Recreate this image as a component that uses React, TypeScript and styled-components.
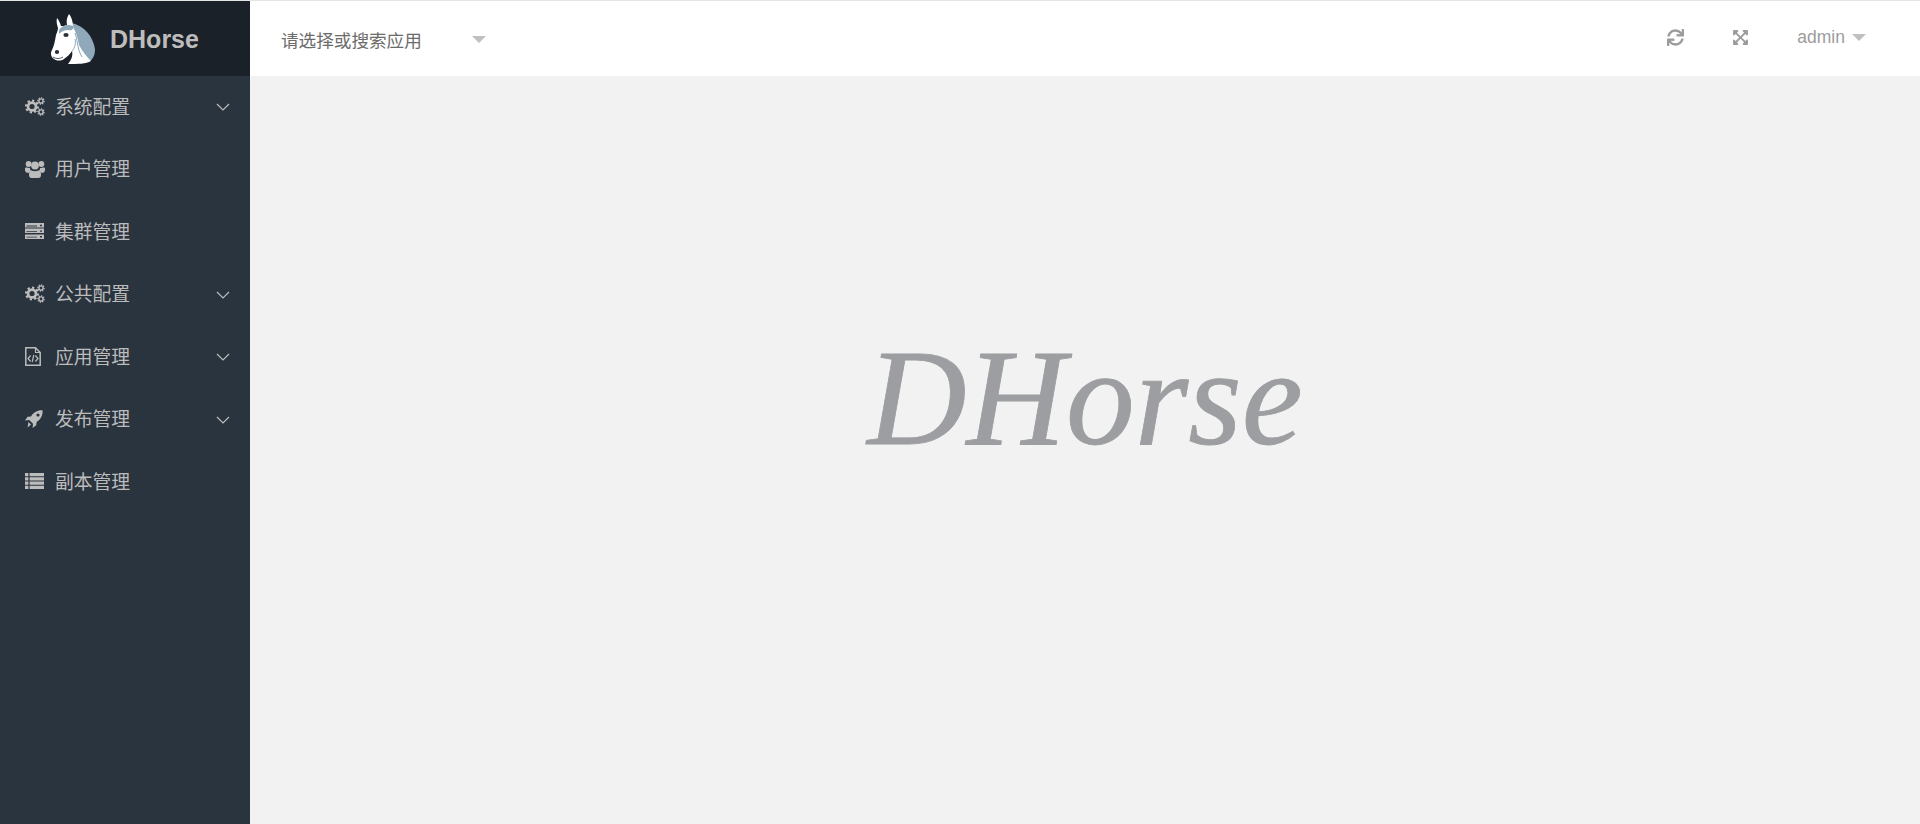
import { ReactNode } from "react";
import styled, { createGlobalStyle } from "styled-components";
import { FaExpandArrowsAlt, FaSync } from "react-icons/fa";

const GlobalStyle = createGlobalStyle`
  html, body {
    margin: 0;
    padding: 0;
    height: 100%;
    overflow: hidden;
    background: #f2f2f2;
    font-family: "Liberation Sans", "Noto Sans CJK SC", sans-serif;
  }
`;

const Gear = ({ x, y, r }: { x: number; y: number; r: number }) => (
  <g fill="none" stroke="currentColor">
    <circle cx={x} cy={y} r={r * 0.62} strokeWidth={r * 0.42} />
    <circle
      cx={x}
      cy={y}
      r={r * 0.92}
      strokeWidth={r * 0.36}
      pathLength={16}
      strokeDasharray="1 1"
    />
  </g>
);

const CogsIcon = () => (
  <svg width="20" height="19" viewBox="0 0 20 19">
    <Gear x={7} y={9.5} r={6.4} />
    <Gear x={16} y={4} r={3.4} />
    <Gear x={16} y={15} r={3.4} />
  </svg>
);

const UsersIcon = () => (
  <svg width="20" height="18" viewBox="0 0 20 18" fill="currentColor">
    <circle cx="3.6" cy="4" r="2.9" />
    <circle cx="16.4" cy="4" r="2.9" />
    <circle cx="10" cy="5.5" r="3.9" />
    <path d="M0 8.5 C0 7.6 1 7.2 2 7.6 C3 8.1 4.2 8.1 5 7.8 C5 9.5 5.4 10.4 6 11 C4.6 11.5 3.8 12.4 3.5 13 C1.5 13 0 12 0 10 Z" />
    <path d="M20 8.5 C20 7.6 19 7.2 18 7.6 C17 8.1 15.8 8.1 15 7.8 C15 9.5 14.6 10.4 14 11 C15.4 11.5 16.2 12.4 16.5 13 C18.5 13 20 12 20 10 Z" />
    <path d="M6 10.2 C8.4 11.6 11.6 11.6 14 10.2 C15.6 10.8 16 12.6 16 15 C16 17 15 18 13.5 18 L6.5 18 C5 18 4 17 4 15 C4 12.6 4.4 10.8 6 10.2 Z" />
  </svg>
);

const ServerIcon = () => (
  <svg width="19" height="16" viewBox="0 0 19 16" fill="currentColor">
    <path d="M0 0 H19 V4.4 H0 Z M0 5.6 H19 V10 H0 Z M0 11.4 H19 V16 H0 Z" />
    <path
      d="M1.5 2.6 H12 V3.4 H1.5 Z M1.5 8.2 H12 V9 H1.5 Z M1.5 13.8 H12 V14.6 H1.5 Z M15 1.8 H17 V3.2 H15 Z M15 7.4 H17 V8.8 H15 Z M15 13 H17 V14.4 H15 Z"
      fill="#2a343f"
    />
  </svg>
);

const FileCodeIcon = () => (
  <svg width="16" height="19" viewBox="0 0 16 19" fill="none" stroke="currentColor">
    <path d="M0.8 0.8 H10.5 L15.2 5.5 V18.2 H0.8 Z" strokeWidth="1.5" />
    <path d="M10.5 0.8 V5.5 H15.2" strokeWidth="1.2" />
    <path d="M5.6 8.5 L3 11.5 L5.6 14.5 M10.4 8.5 L13 11.5 L10.4 14.5 M8.8 8 L7.2 15" strokeWidth="1.2" />
  </svg>
);

const RocketIcon = () => (
  <svg width="18" height="18" viewBox="0 0 18 18" fill="currentColor">
    <path d="M17.6 0.4 C12.5 0 8.6 2.6 6 6.4 L2.6 6.8 L0 10.4 L4.2 10 L8 13.8 L7.6 18 L11.2 15.2 L11.6 12 C15.4 9.4 18 5.5 17.6 0.4 Z M13 3.4 A1.6 1.6 0 1 1 13 6.6 A1.6 1.6 0 1 1 13 3.4 Z" fillRule="evenodd" />
    <path d="M3.4 12 L6 14.6 L2.6 17.4 Z" />
  </svg>
);

const ListIcon = () => (
  <svg width="19" height="16" viewBox="0 0 19 16" fill="currentColor">
    <path d="M0 0 H3.4 V3.2 H0 Z M4.6 0 H19 V3.2 H4.6 Z M0 4.3 H3.4 V7.5 H0 Z M4.6 4.3 H19 V7.5 H4.6 Z M0 8.6 H3.4 V11.8 H0 Z M4.6 8.6 H19 V11.8 H4.6 Z M0 12.8 H3.4 V16 H0 Z M4.6 12.8 H19 V16 H4.6 Z" />
  </svg>
);

type MenuEntry = { label: string; icon: ReactNode; arrow?: boolean };

const menu: MenuEntry[] = [
  { label: "系统配置", icon: <CogsIcon />, arrow: true },
  { label: "用户管理", icon: <UsersIcon /> },
  { label: "集群管理", icon: <ServerIcon /> },
  { label: "公共配置", icon: <CogsIcon />, arrow: true },
  { label: "应用管理", icon: <FileCodeIcon />, arrow: true },
  { label: "发布管理", icon: <RocketIcon />, arrow: true },
  { label: "副本管理", icon: <ListIcon /> },
];

const HorseLogo = () => (
  <svg width="46" height="52" viewBox="50 14 46 52">
    <path
      d="M62 28 L72 24 C84 27 93 37 95 50 C95 56 93 60 90 62 L80 56 L74 30 Z"
      fill="#8fa9bb"
    />
    <path
      d="M57 19 C59 21 60 24 61 27 C63 27 65 27 67 26 C66 22 67 18 69 15 C71 17 73 22 73 28 C76 33 78 40 79 46 C82 52 87 58 91 62 C86 65 78 65 68 65 C72 60 73 56 72 52 C70 55 67 58 64 60 C61 62 57 62 54 60 C51 58 50 54 52 51 C54 47 55 42 56 36 C57 33 58 31 58 29 C57 26 56 22 57 19 Z"
      fill="#ffffff"
    />
    <path
      d="M59 31 C62 26 68 25 73 27 C74 30 72 32 68 31 C65 31 62 32 59 35 Z"
      fill="#8fa9bb"
    />
    <path
      d="M75 34 C78 42 77 50 82 58 M72 52 C75 49 76 44 75 40"
      fill="none"
      stroke="#8fa9bb"
      strokeWidth="1"
    />
    <ellipse cx="66" cy="36" rx="2.6" ry="1.9" fill="#27303a" />
    <ellipse cx="57" cy="53" rx="2.2" ry="1.9" fill="#27303a" />
    <path d="M53 58 C56 60 60 60 63 58" fill="none" stroke="#27303a" strokeWidth="0.8" />
  </svg>
);

const App = () => {
  return (
    <Page>
      <GlobalStyle />
      <Sidebar>
        <Brand>
          <HorseLogo />
          <BrandName>DHorse</BrandName>
        </Brand>
        <Menu>
          {menu.map(({ label, icon, arrow }) => (
            <MenuItem key={label}>
              <MenuIcon>{icon}</MenuIcon>
              <MenuLabel>{label}</MenuLabel>
              {arrow && (
                <Arrow viewBox="0 0 14 8">
                  <path d="M1 1 L7 7 L13 1" />
                </Arrow>
              )}
            </MenuItem>
          ))}
        </Menu>
      </Sidebar>
      <Main>
        <TopBar>
          <AppSelect>
            <span>请选择或搜索应用</span>
            <Caret />
          </AppSelect>
          <Actions>
            <ActionIcon>
              <FaSync />
            </ActionIcon>
            <ActionIcon>
              <FaExpandArrowsAlt />
            </ActionIcon>
            <UserMenu>
              admin
              <Caret />
            </UserMenu>
          </Actions>
        </TopBar>
        <Content>
          <BigTitle>DHorse</BigTitle>
        </Content>
      </Main>
    </Page>
  );
};

const Page = styled.div`
  display: grid;
  grid-template-columns: 250px 1fr;
  height: 824px;
  border-top: 1px solid #e4e4e4;
  box-sizing: border-box;
`;

const Sidebar = styled.aside`
  background: #2a343f;
  display: flex;
  flex-direction: column;
`;

const Brand = styled.div`
  height: 75px;
  background: #1b2129;
  display: flex;
  align-items: center;
  padding-left: 50px;
  gap: 14px;
`;

const BrandName = styled.span`
  font-size: 25px;
  font-weight: 700;
  color: #bdbdbd;
  margin-top: 2px;
`;

const Menu = styled.nav`
  display: flex;
  flex-direction: column;
`;

const MenuItem = styled.div`
  height: 62.5px;
  display: flex;
  align-items: center;
  padding: 0 20px 0 25px;
  font-size: 18.8px;
  line-height: 1;
  color: #bcbcbc;
`;

const MenuLabel = styled.span`
  margin-top: 2px;
`;

const MenuIcon = styled.span`
  width: 30px;
  display: flex;
  align-items: center;
  margin-top: -2px;
  color: #bcbcbc;
`;

const Arrow = styled.svg`
  width: 14px;
  height: 8px;
  margin-left: auto;
  fill: none;
  stroke: #bcbcbc;
  stroke-width: 1.2;
`;

const Main = styled.main`
  display: flex;
  flex-direction: column;
  min-width: 0;
`;

const TopBar = styled.header`
  height: 75px;
  background: #fff;
  display: flex;
  align-items: center;
  justify-content: space-between;
  padding: 0 54px 0 31px;
`;

const AppSelect = styled.div`
  display: flex;
  align-items: center;
  gap: 50px;
  font-size: 17.6px;
  color: #6b6b6b;
  margin-top: 1px;
`;

const Caret = styled.i`
  display: inline-block;
  border-style: solid;
  border-width: 7px 7px 0;
  border-color: #c0c0c0 transparent transparent;
`;

const Actions = styled.div`
  display: flex;
  align-items: center;
  color: #9c9c9c;
  margin-top: -3px;
`;

const ActionIcon = styled.span`
  display: flex;
  font-size: 17px;
  margin-right: 48px;
`;

const UserMenu = styled.span`
  display: flex;
  align-items: center;
  gap: 7px;
  font-size: 17.5px;
`;

const Content = styled.section`
  flex: 1;
  display: flex;
  justify-content: center;
  padding-top: 239px;
`;

const BigTitle = styled.h1`
  margin: 0;
  font-family: "Liberation Serif", serif;
  font-style: italic;
  font-weight: 400;
  font-size: 137.5px;
  line-height: 1.2;
  color: #9d9ea1;
  -webkit-text-stroke: 0.8px #9d9ea1;
`;

export default App;
